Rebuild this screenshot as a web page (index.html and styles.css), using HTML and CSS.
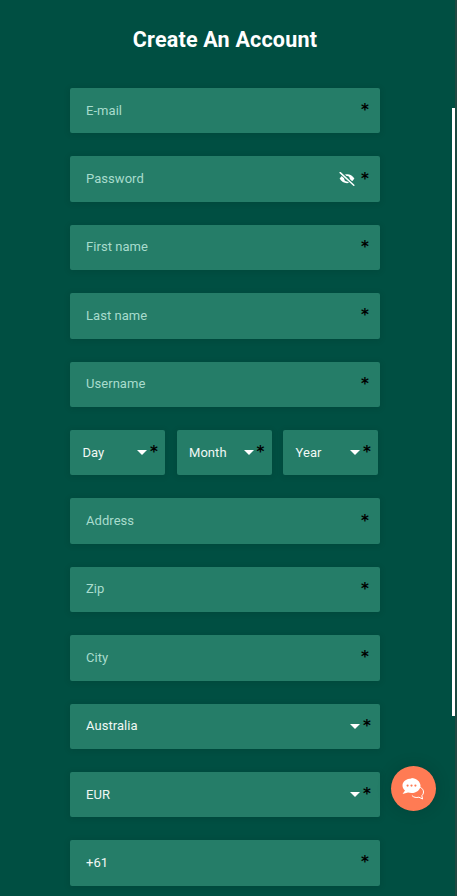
FILE: index.html
```html
<!DOCTYPE html>
<html lang="en">
<head>
<meta charset="utf-8">
<title>Create An Account</title>
<link rel="stylesheet" href="styles.css">
</head>
<body>
<main class="page">
  <h1 class="title">Create An Account</h1>
  <form class="form">
    <div class="field"><span class="label">E-mail</span><span class="req">*</span></div>
    <div class="field"><span class="label">Password</span>
      <svg class="eye" viewBox="0 0 16 14" width="16" height="14" aria-hidden="true">
        <path d="M0.6 6.6C2.4 3.8 5 2.3 8 2.3s5.6 1.5 7.4 4.3C13.600 9.700 11 11.200 8 11.200S2.400 9.700 0.600 6.600Z" fill="#fff"/>
        <circle cx="8" cy="6.700" r="2.700" fill="#257d68"/>
        <path d="M1.600 0.800 14.800 13" stroke="#257d68" stroke-width="3.400"/>
        <path d="M1.200 0.600 14.800 13.200" stroke="#fff" stroke-width="1.500" stroke-linecap="round"/>
      </svg>
      <span class="req">*</span></div>
    <div class="field"><span class="label">First name</span><span class="req">*</span></div>
    <div class="field"><span class="label">Last name</span><span class="req">*</span></div>
    <div class="field"><span class="label">Username</span><span class="req">*</span></div>
    <div class="dob">
      <div class="field small"><span class="value">Day</span><span class="caret"></span><span class="req">*</span></div>
      <div class="field small"><span class="value">Month</span><span class="caret"></span><span class="req">*</span></div>
      <div class="field small"><span class="value">Year</span><span class="caret"></span><span class="req">*</span></div>
    </div>
    <div class="field"><span class="label">Address</span><span class="req">*</span></div>
    <div class="field"><span class="label">Zip</span><span class="req">*</span></div>
    <div class="field"><span class="label">City</span><span class="req">*</span></div>
    <div class="field select"><span class="value">Australia</span><span class="caret"></span><span class="req">*</span></div>
    <div class="field select"><span class="value">EUR</span><span class="caret"></span><span class="req">*</span></div>
    <div class="field"><span class="value">+61</span><span class="req">*</span></div>
  </form>
</main>
<div class="scrollbar"></div>
<button class="chat" type="button" aria-label="Chat">
  <svg viewBox="0 0 26 24" width="26" height="24" aria-hidden="true">
    <path d="M16.500 9.500c3.200.4 6 2.500 6 5.500 0 1.500-.7 2.800-1.700 3.700l.8 3.300-3.700-1.800c-2.600.7-5.400.2-7-1.700" fill="none" stroke="#fff" stroke-width="1"/>
    <path d="M10.500 1.500C5.500 1.500 1.500 4.500 1.500 8.500c0 2 1 3.700 2.500 5L1.500 17l5.500-1.400c1.100.3 2.300.5 3.500.5 5 0 9-3.300 9-7.300s-4-7.800-9-7.800Z" fill="#fff"/>
    <circle cx="6.600" cy="8.600" r="1.100" fill="#ff7b54"/>
    <circle cx="10.500" cy="8.600" r="1.100" fill="#ff7b54"/>
    <circle cx="14.400" cy="8.600" r="1.100" fill="#ff7b54"/>
  </svg>
</button>
</body>
</html>
```
FILE: styles.css
```css
* { box-sizing: border-box; }
html, body { margin: 0; height: 896px; overflow: hidden; }
body {
  background: #004f42;
  font-family: Roboto, "Noto Sans", sans-serif;
  position: relative;
}
body::after {
  content: "";
  position: absolute;
  top: 0;
  right: 0;
  width: 2px;
  height: 100%;
  background: #1f4a42;
}
.page { padding: 24px 77px 0 70px; }
.title {
  margin: 0 0 32px;
  height: 32px;
  line-height: 32px;
  text-align: center;
  color: #fff;
  font-size: 21.500px;
  font-weight: 700;
  letter-spacing: .2px;
}
.form { display: flex; flex-direction: column; gap: 23px; }
.field {
  height: 45.4px;
  display: flex;
  align-items: center;
  padding: 0 11px 0 16px;
  background: #257d68;
  border-radius: 2px;
  box-shadow: 0 1px 6px rgba(0, 40, 30, .18);
  font-size: 13px;
  letter-spacing: .05px;
}
.label { color: #a8dccd; flex: 1; margin-top: -1px; }
.value { color: #f0f8f5; flex: 1; margin-top: -1px; }
.req {
  color: #000;
  font-family: "DejaVu Sans", sans-serif;
  font-size: 15px;
  font-weight: 700;
  line-height: 1;
  margin-top: 0;
}
.eye { margin-right: 6px; }
.caret {
  width: 0;
  height: 0;
  border-left: 5px solid transparent;
  border-right: 5px solid transparent;
  border-top: 5px solid #fff;
  margin-right: 3px;
}
.select { padding-right: 9px; }
.dob { display: flex; gap: 11.500px; width: 308px; }
.small { flex: 1; padding: 0 7px 0 12.500px; }
.scrollbar {
  position: absolute;
  top: 108px;
  left: 452px;
  width: 3px;
  height: 608px;
  background: #fff;
}
.chat {
  position: absolute;
  left: 391px;
  top: 766px;
  width: 45px;
  height: 45px;
  padding: 0;
  border: 0;
  border-radius: 50%;
  background: #ff7b54;
  box-shadow: 0 0 14px rgba(0, 40, 30, .25);
  display: flex;
  align-items: center;
  justify-content: center;
}
```
